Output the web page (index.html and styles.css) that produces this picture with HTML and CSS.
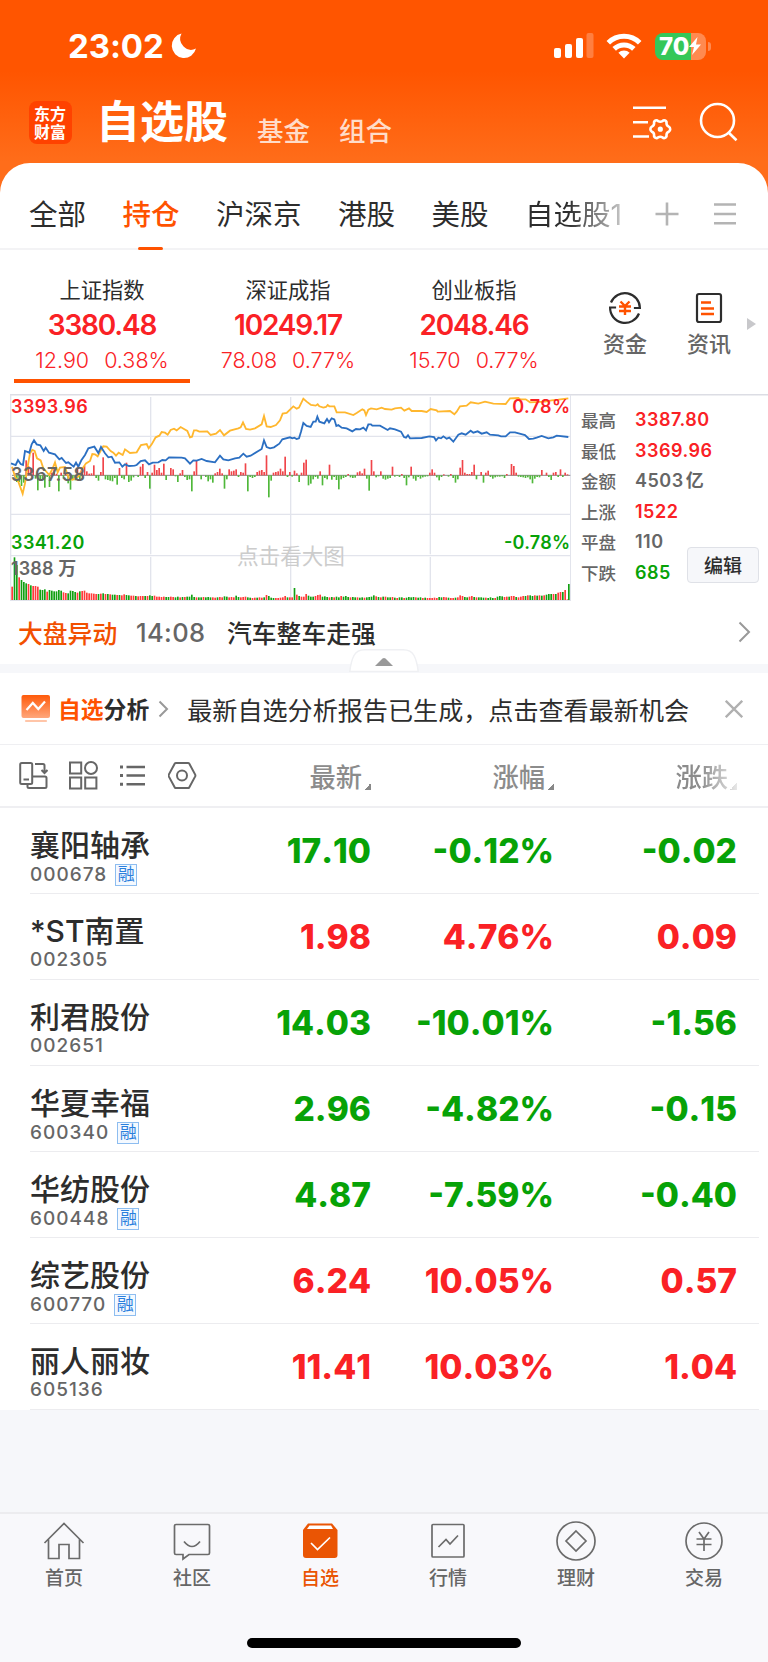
FILE: index.html
```html
<!DOCTYPE html>
<html lang="zh-CN">
<head>
    <meta charset="UTF-8" />
    <meta name="viewport" content="width=device-width, initial-scale=1.0" />
    <title>自选股</title>
    <link rel="stylesheet" href="styles.css">
</head>
<body>
    <header class="top">
        <div class="status-bar">
            <span class="clock">23:02</span>
            <svg class="moon" width="26" height="26" viewBox="0 0 26 26"><path d="M10.5.6A12.3 12.3 0 1 0 25 15.6 11 11 0 0 1 10.5.6Z" fill="#fff"/></svg>
            <svg class="signal" width="40" height="26" viewBox="0 0 40 26" fill="#fff">
                <rect x="0" y="15" width="7" height="10" rx="2"/>
                <rect x="11" y="11" width="7" height="14" rx="2"/>
                <rect x="22" y="5" width="7" height="20" rx="2"/>
                <rect x="32.500" y="0" width="7" height="25" rx="2" opacity=".25"/>
            </svg>
            <svg class="wifi" width="36" height="26" viewBox="0 0 36 26" fill="none" stroke="#fff" stroke-width="5">
                <path d="M2.300 9.800a22.300 22.300 0 0 1 31.400 0"/>
                <path d="M8.200 15.900a14 14 0 0 1 19.600 0"/>
                <path d="M18 25.500l-5.600-5.700a8 8 0 0 1 11.200 0Z" fill="#fff" stroke="none"/>
            </svg>
            <div class="battery">
                <span>70</span>
                <svg width="12" height="18" viewBox="0 0 12 18"><path d="M8.500 0L0 10h5l-2 8L12 7.500H7Z" fill="#fff"/></svg>
            </div>
        </div>
        <div class="title-bar">
            <div class="logo">东方财富</div>
            <h1>自选股</h1>
            <a class="sub-title">基金</a>
            <a class="sub-title">组合</a>
            <svg class="filter" width="40" height="36" viewBox="0 0 40 36" fill="none" stroke="#fff" stroke-width="2.600">
                <path d="M1 2.800h33M1 17.300h15M1 31.500h16"/>
                <path stroke-linejoin="round" d="M23.500 15.500q1.500-.6 2.600.6 2.200 1.200 4.400 0 1.100-1.200 2.600-.6 1.800.8 1.400 2.800 0 2.400 2.200 3.300 1.500.8 1.500 2.600t-1.500 2.600q-2.200.9-2.200 3.300.4 2-1.400 2.800-1.500.6-2.600-.6-2.200-1.200-4.400 0-1.100 1.200-2.600.6-1.800-.8-1.400-2.800 0-2.400-2.200-3.300-1.500-.8-1.500-2.600t1.500-2.600q2.200-.9 2.200-3.300-.4-2 1.400-2.800Z"/>
                <circle cx="28.300" cy="24.200" r="1.300" fill="#fff"/>
            </svg>
            <svg class="search" width="40" height="40" viewBox="0 0 40 40" fill="none" stroke="#fff" stroke-width="2.600"><circle cx="18.500" cy="18.500" r="16.500"/><path d="M29.500 30.500l8 7.800"/></svg>
        </div>
    </header>

    <main class="sheet">
        <nav class="tabs">
            <a>全部</a>
            <a class="active">持仓</a>
            <a>沪深京</a>
            <a>港股</a>
            <a>美股</a>
            <a class="fade">自选股1</a>
            <svg class="plus" width="24" height="24" viewBox="0 0 24 24" stroke="#b4b4b4" stroke-width="2.600"><path d="M12 .5v23M.5 12h23"/></svg>
            <svg width="22" height="24" viewBox="0 0 22 24" stroke="#b4b4b4" stroke-width="2.600"><path d="M0 2.500h22M0 12h22M0 21.300h22"/></svg>
        </nav>

        <section class="indices">
            <div class="index active"><h3>上证指数</h3><strong>3380.48</strong><p><span>12.90</span><span>0.38%</span></p></div>
            <div class="index"><h3>深证成指</h3><strong>10249.17</strong><p><span>78.08</span><span>0.77%</span></p></div>
            <div class="index"><h3>创业板指</h3><strong>2048.46</strong><p><span>15.70</span><span>0.77%</span></p></div>
            <div class="quick">
                <svg width="34" height="34" viewBox="0 0 34 34" fill="none" stroke="#2d2d2d" stroke-width="2.200">
                    <path d="M3 11.500A15 15 0 0 1 31.900 17h-6M31 22.500A15 15 0 0 1 2.100 16.500h6"/>
                    <path d="M12.500 10.500l4.500 4.500 4.500-4.500M11 15.500h12M11 20h12M17 15v9" stroke="#ff5200" stroke-width="2.400"/>
                </svg>
                <span>资金</span>
            </div>
            <div class="quick">
                <svg width="34" height="34" viewBox="0 0 34 34" fill="none" stroke="#2d2d2d" stroke-width="2.200">
                    <rect x="5" y="3" width="24" height="28" rx="2"/>
                    <path d="M9 11.500h10M9 17.500h13M9 23h13" stroke="#ff5200" stroke-width="2.400"/>
                </svg>
                <span>资讯</span>
            </div>
            <i class="more-arrow"></i>
        </section>

        <section class="market">
            <svg class="chart" id="chart" width="561" height="207" viewBox="30 27 1683 621">
                <g class="grid">
                    <path d="M452 36V508M452 516V645M872 36V508M872 516V645M1291 36V508M1291 516V645"/>
                    <path d="M33 154H1711M33 388H1711M33 512H1711"/>
                    <path d="M32 648V29M1712 29V648M32 646H1713"/>
                </g>
                <path class="zero" d="M36 271H1711"/>
                <g id="bars"></g>
                <polyline class="line yellow" points="36,245 45,275 55,290 68,326 75,295 82,250 90,205 97,195 104,198 111,220 122,226 130,250 148,270 158,250 165,232 173,262 180,248 195,246 207,282 218,284 235,275 248,250 258,235 270,228 277,207 285,208 293,214 303,195 310,184 320,185 332,198 340,203 348,212 356,203 368,210 375,193 390,204 410,202 423,180 440,177 446,190 455,178 467,157 478,152 485,141 495,143 503,149 512,135 522,131 530,136 542,126 552,132 562,138 570,157 576,155 582,136 590,136 598,140 622,139 632,150 648,146 660,135 672,151 690,137 715,130 722,127 729,112 738,132 750,134 765,130 785,118 792,93 800,124 812,126 828,120 840,106 848,86 860,84 870,74 880,64 890,71 897,68 910,41 920,50 933,60 947,62 953,58 958,64 970,68 978,66 983,60 988,64 1003,64 1010,82 1035,82 1060,90 1070,84 1087,73 1093,76 1098,90 1105,74 1113,70 1130,73 1145,68 1155,72 1175,74 1185,70 1203,68 1213,77 1227,70 1235,78 1265,78 1280,81 1292,72 1310,76 1313,80 1350,78 1363,88 1370,80 1380,64 1400,62 1412,52 1435,56 1455,50 1480,56 1517,57 1530,40 1555,39 1560,43 1577,43 1590,52 1635,50 1655,46 1675,44 1705,40"/>
                <polyline class="line blue" points="33,235 47,240 54,225 62,237 69,240 75,198 88,203 95,178 102,166 110,178 121,181 131,198 137,188 147,203 165,208 178,223 185,219 198,234 205,232 221,245 228,233 235,245 244,226 255,210 265,190 283,185 295,204 303,186 315,205 325,217 335,215 345,233 358,232 367,245 375,238 387,243 404,242 410,240 422,228 435,226 447,238 458,233 475,232 487,225 497,226 507,217 545,218 555,220 570,236 580,226 590,227 605,222 620,228 645,232 660,212 670,223 685,226 705,220 718,218 730,206 740,215 752,212 785,192 792,166 800,186 810,190 822,187 838,176 847,163 870,157 877,160 883,158 890,162 897,160 903,140 910,114 920,123 932,126 940,110 947,110 952,95 958,110 973,115 981,102 987,112 995,100 1003,103 1009,123 1015,120 1025,128 1040,130 1057,139 1068,132 1080,133 1090,128 1098,136 1105,118 1113,118 1117,122 1140,122 1163,135 1170,130 1185,133 1203,140 1212,156 1218,158 1224,151 1230,160 1265,159 1288,154 1302,156 1308,166 1315,158 1323,160 1330,154 1340,161 1348,158 1360,170 1375,149 1385,145 1397,149 1412,137 1420,143 1433,139 1445,146 1460,142 1470,149 1495,151 1503,154 1517,154 1530,142 1545,142 1575,150 1587,162 1600,161 1610,158 1625,153 1645,160 1660,157 1670,152 1705,156"/>
                <text class="label red" x="33" y="83" textLength="230">3393.96</text>
                <text class="label gray" x="33" y="288" textLength="222">3367.58</text>
                <text class="label green" x="33" y="491" textLength="220">3341.20</text>
                <text class="label gray" x="33" y="570" textLength="196">1388 万</text>
                <text class="label red" x="1537" y="83" textLength="173">0.78%</text>
                <text class="label green" x="1512" y="491" textLength="198">-0.78%</text>
                <text class="hint" x="711" y="536" textLength="324">点击看大图</text>
            </svg>
            <dl class="stats">
                <dt>最高</dt><dd class="red">3387.80</dd>
                <dt>最低</dt><dd class="red">3369.96</dd>
                <dt>金额</dt><dd class="gray">4503 亿</dd>
                <dt>上涨</dt><dd class="red">1522</dd>
                <dt>平盘</dt><dd class="gray">110</dd>
                <dt>下跌</dt><dd class="green">685</dd>
            </dl>
            <button class="edit">编辑</button>
        </section>

        <section class="news">
            <b>大盘异动</b>
            <time>14:08</time>
            <p>汽车整车走强</p>
            <svg width="14" height="22" viewBox="0 0 14 22" fill="none" stroke="#999" stroke-width="2"><path d="M1.500 1.500L11 11l-9.500 9.500"/></svg>
            <svg class="handle" width="70" height="23" viewBox="0 0 70 23"><path d="M.8 22.500Q2 12 5 6.500 8 .8 16 .8H54Q62 .8 65 6.500 68 12 69.200 22.500Z" fill="#fff" stroke="#eff0f3" stroke-width="1.500"/><path d="M26 17l7.500-7.500q1.500-1 3 0L44 17Z" fill="#999"/></svg>
        </section>

        <section class="analysis">
            <svg width="30" height="28" viewBox="0 0 30 28">
                <defs><linearGradient id="g" x1="0" y1="0" x2="0" y2="1"><stop offset="0" stop-color="#ff5a0a"/><stop offset="1" stop-color="#ffa77c"/></linearGradient></defs>
                <rect x=".5" y="0" width="28.500" height="23" rx="2" fill="url(#g)"/>
                <path d="M5.500 15l6.300-7 5.500 6 6.700-7.500" fill="none" stroke="#fff" stroke-width="2.200"/>
                <path d="M5 26h20" stroke="#ffc5a8" stroke-width="2.200" stroke-linecap="round"/>
            </svg>
            <b><em>自选</em>分析</b>
            <svg class="chevron" width="11" height="18" viewBox="0 0 11 18" fill="none" stroke="#999" stroke-width="2"><path d="M1.500 1.500L9 9l-7.500 7.500"/></svg>
            <p>最新自选分析报告已生成，点击查看最新机会</p>
            <svg class="close" width="18" height="18" viewBox="0 0 18 18" stroke="#b0b0b0" stroke-width="2.300"><path d="M.8.8l16.400 16.400M17.200.8L.8 17.200"/></svg>
        </section>

        <section class="list-head">
            <div class="tools">
                <svg width="29" height="29" viewBox="0 0 29 29">
                    <rect x="1.200" y="2" width="12" height="21" rx="1.500"/><path d="M4.500 18.500h5.500M16 3h8q1.500 0 1.500 1.500V11M22.500 9l3 3 3-3M13.500 15.500H26q1.500 0 1.500 1.500v8.500q0 1.500-1.500 1.500H10q-1.500 0-1.500-1.500V23"/>
                </svg>
                <svg width="29" height="29" viewBox="0 0 29 29"><rect x="1" y="1.500" width="11.200" height="11"/><rect x="1" y="16.500" width="11.200" height="11"/><rect x="16.200" y="16.500" width="11.200" height="11"/><circle cx="22" cy="7" r="6"/></svg>
                <svg width="29" height="29" viewBox="0 0 29 29"><path d="M8.500 6H27M8.500 14.500H27M8.500 23.300H27" stroke-width="2.600"/><path d="M2 6h3M2 14.500h3M2 23.300h3" stroke-width="3"/></svg>
                <svg width="29" height="29" viewBox="0 0 29 29"><path d="M8 1.900h12q.8 0 1.200.7l6 11q.4.900 0 1.800l-6 11q-.4.700-1.200.7H8q-.8 0-1.200-.7l-6-11q-.4-.9 0-1.800l6-11q.4-.7 1.200-.7Z"/><circle cx="14" cy="14.500" r="5"/></svg>
            </div>
            <span>最新<i></i></span>
            <span>涨幅<i></i></span>
            <span class="fade">涨跌<i></i></span>
        </section>

        <ul class="stocks">
            <li class="down"><div><h4>襄阳轴承</h4><p>000678<mark>融</mark></p></div><b>17.10</b><b>-0.12%</b><b>-0.02</b></li>
            <li class="up"><div><h4>*ST南置</h4><p>002305</p></div><b>1.98</b><b>4.76%</b><b>0.09</b></li>
            <li class="down"><div><h4>利君股份</h4><p>002651</p></div><b>14.03</b><b>-10.01%</b><b>-1.56</b></li>
            <li class="down"><div><h4>华夏幸福</h4><p>600340<mark>融</mark></p></div><b>2.96</b><b>-4.82%</b><b>-0.15</b></li>
            <li class="down"><div><h4>华纺股份</h4><p>600448<mark>融</mark></p></div><b>4.87</b><b>-7.59%</b><b>-0.40</b></li>
            <li class="up"><div><h4>综艺股份</h4><p>600770<mark>融</mark></p></div><b>6.24</b><b>10.05%</b><b>0.57</b></li>
            <li class="up"><div><h4>丽人丽妆</h4><p>605136</p></div><b>11.41</b><b>10.03%</b><b>1.04</b></li>
        </ul>
    </main>

    <footer class="tab-bar">
        <div class="items">
            <a><svg width="42" height="42" viewBox="0 0 42 42"><path d="M1.500 23L21 3.500 40.500 23M5.500 19.500V38.500H16V24.500H26V38.500H36.500V19.500"/></svg>首页</a>
            <a><svg width="42" height="42" viewBox="0 0 42 42"><path d="M5 4.500H37q1.500 0 1.500 1.500V33q0 1.500-1.500 1.500H18L12 39V34.500H5q-1.500 0-1.500-1.500V6q0-1.500 1.500-1.500ZM13 21.500q8 10 16 0"/></svg>社区</a>
            <a class="active"><svg width="42" height="42" viewBox="0 0 42 42"><path d="M9 3.500H33L38.500 10V35q0 3-3 3H7q-3 0-3-3V10Z" fill="#ea5504" stroke="none"/><path d="M10.500 5.500H32L34 9H8Z" fill="#fff" stroke="none"/><path d="M12 23l6.500 6.500L31 17.500" stroke="#fff"/></svg>自选</a>
            <a><svg width="42" height="42" viewBox="0 0 42 42"><rect x="5" y="4.500" width="32" height="32.500" rx="1"/><path d="M11.500 27l7.500-7.500 4 4.500 8-8.500"/></svg>行情</a>
            <a><svg width="42" height="42" viewBox="0 0 42 42"><circle cx="21" cy="21" r="19"/><path d="M21 11L31 21 21 31 11 21Z"/></svg>理财</a>
            <a><svg width="42" height="42" viewBox="0 0 42 42"><circle cx="21" cy="21" r="18"/><path d="M16 12l5 7 5-7M13.500 19h15M13.500 24.500h15M21 19v12"/></svg>交易</a>
        </div>
        <div class="home-indicator"></div>
    </footer>
    <script src="chart.js"></script>
</body>
</html>
```
FILE: styles.css
```css
/* Global */
* {
    box-sizing: border-box;
    margin: 0;
    padding: 0;
}

body {
    font-family: Inter, "Noto Sans CJK SC", sans-serif;
    width: 768px;
    height: 1662px;
    background: #f6f7fa;
    color: #2d2d2d;
    display: flex;
    flex-direction: column;
}

svg {
    display: block;
    flex: none;
}

em, i {
    font-style: normal;
}

.red { color: #fa2125; fill: #fa2125; }
.green { color: #07a207; fill: #07a207; }
.gray { color: #666; fill: #666; }

/* Header */
.top {
    height: 203px;
    flex: none;
    background: linear-gradient(#ff5500 35%, #ff6d1a 80%);
    color: #fff;
}

.status-bar {
    height: 92px;
    padding: 0 62px 0 68px;
    display: flex;
    align-items: center;
}

.clock {
    font-size: 33px;
    font-weight: 700;
    letter-spacing: -0.1px;
    width: 103px;
}

.signal {
    margin-left: auto;
}

.wifi {
    margin: 0 13px 0 12px;
}

.battery {
    position: relative;
    width: 51px;
    height: 27px;
    border-radius: 8px;
    background: linear-gradient(90deg, #34c759 71%, #ff8a50 71%);
    display: flex;
    align-items: center;
    padding-left: 4px;
    font-size: 24px;
    font-weight: 800;
}

.battery::after {
    content: "";
    position: absolute;
    right: -5px;
    top: 9px;
    width: 3px;
    height: 9px;
    border-radius: 0 4px 4px 0;
    background: #ff8a50;
}

.title-bar {
    height: 71px;
    padding: 9px 29px 0 29px;
    display: flex;
    align-items: flex-start;
}

.logo {
    width: 43px;
    height: 43px;
    padding: 4px 5px;
    border-radius: 8px;
    background: #ff4200;
    font-family: "Noto Sans CJK SC", sans-serif;
    font-size: 16px;
    font-weight: 700;
    line-height: 17.500px;
}

h1 {
    margin-left: 24px;
    font-size: 44px;
    font-weight: 700;
    line-height: 43px;
    width: 161px;
}

.sub-title {
    width: 82px;
    font-size: 26.500px;
    line-height: 60px;
    font-weight: 500;
    color: #ffdcc9;
}

.filter {
    margin: 4px 27px 0 auto;
}

.search {
    margin-top: 1px;
}

/* White sheet */
.sheet {
    margin-top: -40px;
    background: #fff;
    border-radius: 30px 30px 0 0;
}

.tabs {
    height: 87px;
    padding: 17px 31px 0 29px;
    display: flex;
    align-items: center;
    border-bottom: 2px solid #f3f3f5;
    font-size: 28.500px;
    white-space: nowrap;
}

.tabs a {
    position: relative;
    top: -1.500px;
    margin-right: 36.500px;
}

.tabs .active {
    color: #ff5200;
    font-weight: 500;
}

.tabs .active::after {
    content: "";
    position: absolute;
    left: 15px;
    bottom: -17px;
    width: 25px;
    height: 3px;
    border-radius: 2px;
    background: #ff5200;
}

.tabs .fade {
    width: 96px;
    margin-right: 34px;
    background: linear-gradient(90deg, #2d2d2d 45%, #c4c4c4);
    background-clip: text;
    color: transparent;
}

.tabs .plus {
    margin-right: 35px;
}

.indices {
    height: 144px;
    padding-left: 9px;
    display: flex;
}

.index {
    width: 186px;
    padding-top: 25px;
    display: flex;
    flex-direction: column;
    align-items: center;
    position: relative;
    color: #fa2125;
}

.index h3 {
    color: #2d2d2d;
    font-size: 21.300px;
    font-weight: 400;
    line-height: 30px;
}

.index strong {
    font-size: 28px;
    font-weight: 600;
    line-height: 41px;
    letter-spacing: -1.200px;
}

.index p {
    display: flex;
    gap: 15px;
    font-size: 21.500px;
    font-weight: 350;
    line-height: 28px;
}

.index.active::after {
    content: "";
    position: absolute;
    left: 5px;
    bottom: 11px;
    width: 176px;
    height: 4px;
    background: #ff5200;
}

.quick {
    width: 84px;
    padding-top: 41px;
    display: flex;
    flex-direction: column;
    align-items: center;
    font-size: 22px;
    font-weight: 500;
    line-height: 39px;
    color: #666;
}

.quick:nth-child(4) {
    margin-left: 16px;
}

.more-arrow {
    margin: 68px 0 0 -4px;
    border: 6px solid transparent;
    border-left: 9px solid #c8c8cb;
    border-right: 0;
    height: 12px;
}

/* Minute chart */
.market {
    height: 207px;
    padding-left: 10px;
    display: flex;
    position: relative;
    background: linear-gradient(#dcdde4, #dcdde4) 10px 0 / 100% 1.500px no-repeat;
}

.grid path {
    stroke: #e2e4ec;
    stroke-width: 4;
    fill: none;
}

.zero {
    stroke: #888;
    stroke-width: 3;
}

.line {
    fill: none;
    stroke-width: 5.500;
}

.yellow { stroke: #ffb72e; }
.blue { stroke: #2b6fc2; }

.label {
    font-size: 54px;
    font-weight: 600;
}

.hint {
    font-size: 65px;
    fill: #ccc;
}

.stats {
    margin: 11px 0 0 10px;
    display: grid;
    grid-template-columns: 54px auto;
    grid-auto-rows: 30.500px;
    align-items: center;
    align-content: start;
    font-size: 17.500px;
    color: #666;
}

.stats dt {
    margin-top: -1px;
    font-weight: 500;
}

.stats dd {
    font-weight: 600;
    font-size: 18px;
    letter-spacing: 0.5px;
    word-spacing: -3px;
    line-height: 26px;
}

.edit {
    position: absolute;
    right: 9px;
    top: 153px;
    width: 72px;
    height: 36px;
    padding-bottom: 2px;
    border: 1px solid #dfe1e7;
    border-radius: 4px;
    background: #f6f7fa;
    font: 500 19px Inter, "Noto Sans CJK SC", sans-serif;
    color: #2d2d2d;
}

/* Market news */
.news {
    position: relative;
    height: 72px;
    padding: 0 16px 1px 18px;
    border-bottom: 9px solid #f6f7fa;
    display: flex;
    align-items: center;
    font-size: 24.800px;
    font-weight: 500;
}

.news b {
    width: 118px;
    font-weight: 500;
    color: #f25000;
}

.news time {
    width: 91px;
    color: #666;
    font-size: 25.500px;
    font-weight: 500;
    letter-spacing: 0.4px;
}

.news > svg:nth-child(4) {
    margin-left: auto;
}

.handle {
    position: absolute;
    left: 349px;
    bottom: -8px;
}

/* Analysis banner */
.analysis {
    height: 72px;
    padding: 0 25px 0 21px;
    border-bottom: 1.500px solid #efeff2;
    display: flex;
    align-items: center;
    font-size: 25.100px;
    white-space: nowrap;
}

.analysis b {
    margin-left: 7px;
    font-size: 22.800px;
    font-weight: 700;
}

.analysis em {
    color: #ff5200;
}

.chevron {
    margin: 0 18px 0 9px;
}

.close {
    margin-left: auto;
}

/* List header */
.list-head {
    height: 63px;
    padding-left: 19px;
    display: flex;
    align-items: center;
    border-bottom: 2px solid #efeff2;
    color: #8c8c8c;
    font-size: 26.300px;
    font-weight: 500;
}

.tools {
    width: 169px;
    display: flex;
    gap: 20.500px;
    fill: none;
    stroke: #666;
    stroke-width: 2;
}

.list-head span {
    width: 183px;
    display: flex;
    justify-content: flex-end;
    align-items: center;
}

.list-head i {
    margin: 21px 0 0 2px;
    width: 7px;
    height: 7px;
    background: linear-gradient(135deg, transparent 50%, #888 50%);
}

.list-head .fade {
    mask-image: linear-gradient(90deg, #000 80%, rgba(0, 0, 0, 0.2));
}

/* Stock rows */
.stocks {
    list-style: none;
}

.stocks li {
    height: 86px;
    padding-left: 30px;
    display: flex;
    background: linear-gradient(#ececef, #ececef) 30px 100% / 729px 1.500px no-repeat;
}

.stocks div {
    width: 158px;
    padding-top: 18px;
}

.stocks h4 {
    font-size: 30px;
    font-weight: 500;
    line-height: 38px;
    white-space: nowrap;
}

.stocks p {
    display: flex;
    align-items: center;
    gap: 8px;
    font-size: 19px;
    font-weight: 500;
    line-height: 20px;
    letter-spacing: 1px;
    color: #666;
}

.stocks mark {
    width: 22px;
    height: 22px;
    border: 1.500px solid #8dbdf0;
    background: #f4f9ff;
    color: #2b7fdd;
    font-size: 17px;
    font-weight: 400;
    line-height: 19px;
    letter-spacing: 0;
    text-align: center;
}

.stocks b {
    width: 183px;
    text-align: right;
    font-size: 33.500px;
    font-weight: 800;
    font-kerning: none;
    line-height: 87px;
}

.up b { color: #fa2125; }
.down b { color: #07a207; }

/* Bottom bar */
.tab-bar {
    margin-top: auto;
    height: 150px;
    border-top: 2px solid #ececef;
    background: #f8f8fb;
}

.items {
    display: flex;
    padding-top: 6px;
}

.items a {
    flex: 1;
    display: flex;
    flex-direction: column;
    align-items: center;
    font-size: 19px;
    font-weight: 500;
    line-height: 34px;
    color: #666;
}

.items svg {
    fill: none;
    stroke: #6b6b6b;
    stroke-width: 1.700;
}

.items .active {
    color: #ea5504;
}

.home-indicator {
    width: 274px;
    height: 10px;
    margin: 42px auto 0;
    border-radius: 5px;
    background: #000;
}
```
FILE: chart.js
```js
// one entry per trading minute, positive = up (red), negative = down (green)
const flow = [
    0, 0, -20, -20, -32, -22, 45, 28, 22, 68, -10, -45, -12, -12, -37, -5, -35, 8, 20, 5,
    -48, 8, -10, 8, -24, -43, -14, -15, 24, -12, 25, 28, 12, 5, 6, 30, -8, -16, 10, 54,
    -12, -14, -16, -18, -8, -28, 22, -8, -12, 38, -20, -16, -6, 0, -5, 26, 34, -8, 10, -40,
    8, 32, 16, 22, 8, 35, -14, 0, 22, 18, -3, -20, 6, 16, -5, -14, -12, -48, 12, 45,
    0, -12, 0, -5, -18, -12, -22, 6, 10, 20, 6, -40, -12, 18, 12, 14, 18, -5, 10, 8,
    36, -48, -5, -8, -5, 10, 14, 16, 10, 60, -66, -16, 8, 10, 12, 20, 12, 56, -5, 10,
    -4, 14, 6, -20, 8, 38, 47, -30, -25, -12, -5, -10, 12, -30, -8, -12, 32, -13, -5, -14,
    -42, -12, -8, -5, 4, -6, -8, -7, 9, 12, 6, 20, -10, -46, 46, 12, -6, -3, 12, -10,
    -13, -10, -8, 26, -4, -2, -5, 4, -8, -30, -6, 26, -10, -16, -5, -10, -6, -4, -3, 8,
    18, 8, -6, -15, -5, 3, 0, -4, 4, -8, -22, -12, 23, 46, 8, 4, 4, 10, 32, -12,
    0, 10, -22, 8, 14, -5, -10, -6, -4, -4, -3, -8, 4, 0, 34, 28, 8, -4, -5, -6,
    -8, -6, -12, -24, -10, -5, -6, 16, 0, 8, -5, -14, 8, 10, -5, 18, -5, 8, 3, 0
];

const volume = [
    40, -128, -105, 68, -60, -54, -50, 48, -44, 42, 42, 40, -31, -30, -32, 25, -30, -28, -26, -26,
    -30, -28, 23, 21, -20, -28, -27, -24, 22, -26, 27, 28, 22, 20, 20, 19, 18, -18, 19, -20,
    18, -18, 17, -16, -16, 15, -15, 14, 17, -15, -14, 13, 13, -12, 11, 12, 12, -12, 12, -14,
    -12, 13, 10, 10, 9, 10, -9, -9, 10, 9, -8, -10, 8, -9, 9, -10, -10, -16, -9, 8,
    -8, -8, 9, -8, -9, -8, 8, 7, -8, 9, 8, -11, -10, 8, 9, 8, -13, -9, 8, 9,
    10, -8, -7, 6, 7, -7, 8, 7, -8, 15, -12, -7, -6, 6, 6, 7, 8, 12, -8, 8,
    8, -36, 16, -12, 10, 10, 18, -13, -10, -10, 12, 15, 16, -10, -11, -9, 8, -9, 8, -10,
    -8, 12, -10, -12, -9, 8, -9, -8, 8, -7, -8, 7, -8, -9, -10, -14, 11, -9, 8, -10,
    10, -8, -8, 9, -7, 6, -8, -8, 6, -7, -9, -8, -9, 8, -7, -8, 6, -7, 6, 6,
    6, 7, 6, -9, -8, 9, 8, -7, 6, 6, -7, 8, 14, 12, -9, -8, 10, 12, -9, 8,
    -8, -8, -7, 7, -6, -8, -6, 6, -10, -12, -11, 9, 10, -10, 12, 12, -9, 8, 10, 12,
    -12, 14, -14, -12, 14, -13, 14, -13, 14, -16, -18, -18, 18, -18, 22, 24, -24, 30, 2, 0
];

const bars = document.getElementById("bars");

function addBar(x, y, height, color) {
    const rect = document.createElementNS("http://www.w3.org/2000/svg", "rect");
    rect.setAttribute("x", x);
    rect.setAttribute("y", y);
    rect.setAttribute("width", 5);
    rect.setAttribute("height", height);
    rect.setAttribute("fill", color);
    bars.appendChild(rect);
}

flow.forEach((v, i) => {
    addBar(34 + i * 7, v > 0 ? 271 - v : 271, Math.abs(v), v > 0 ? "#f0454a" : "#4fb83a");
});

volume.forEach((v, i) => {
    addBar(34 + i * 7, 645 - Math.abs(v), Math.abs(v), v > 0 ? "#ff3b3b" : "#12a012");
});

// closing auction
addBar(1704, 597, 48, "#12a012");
```
